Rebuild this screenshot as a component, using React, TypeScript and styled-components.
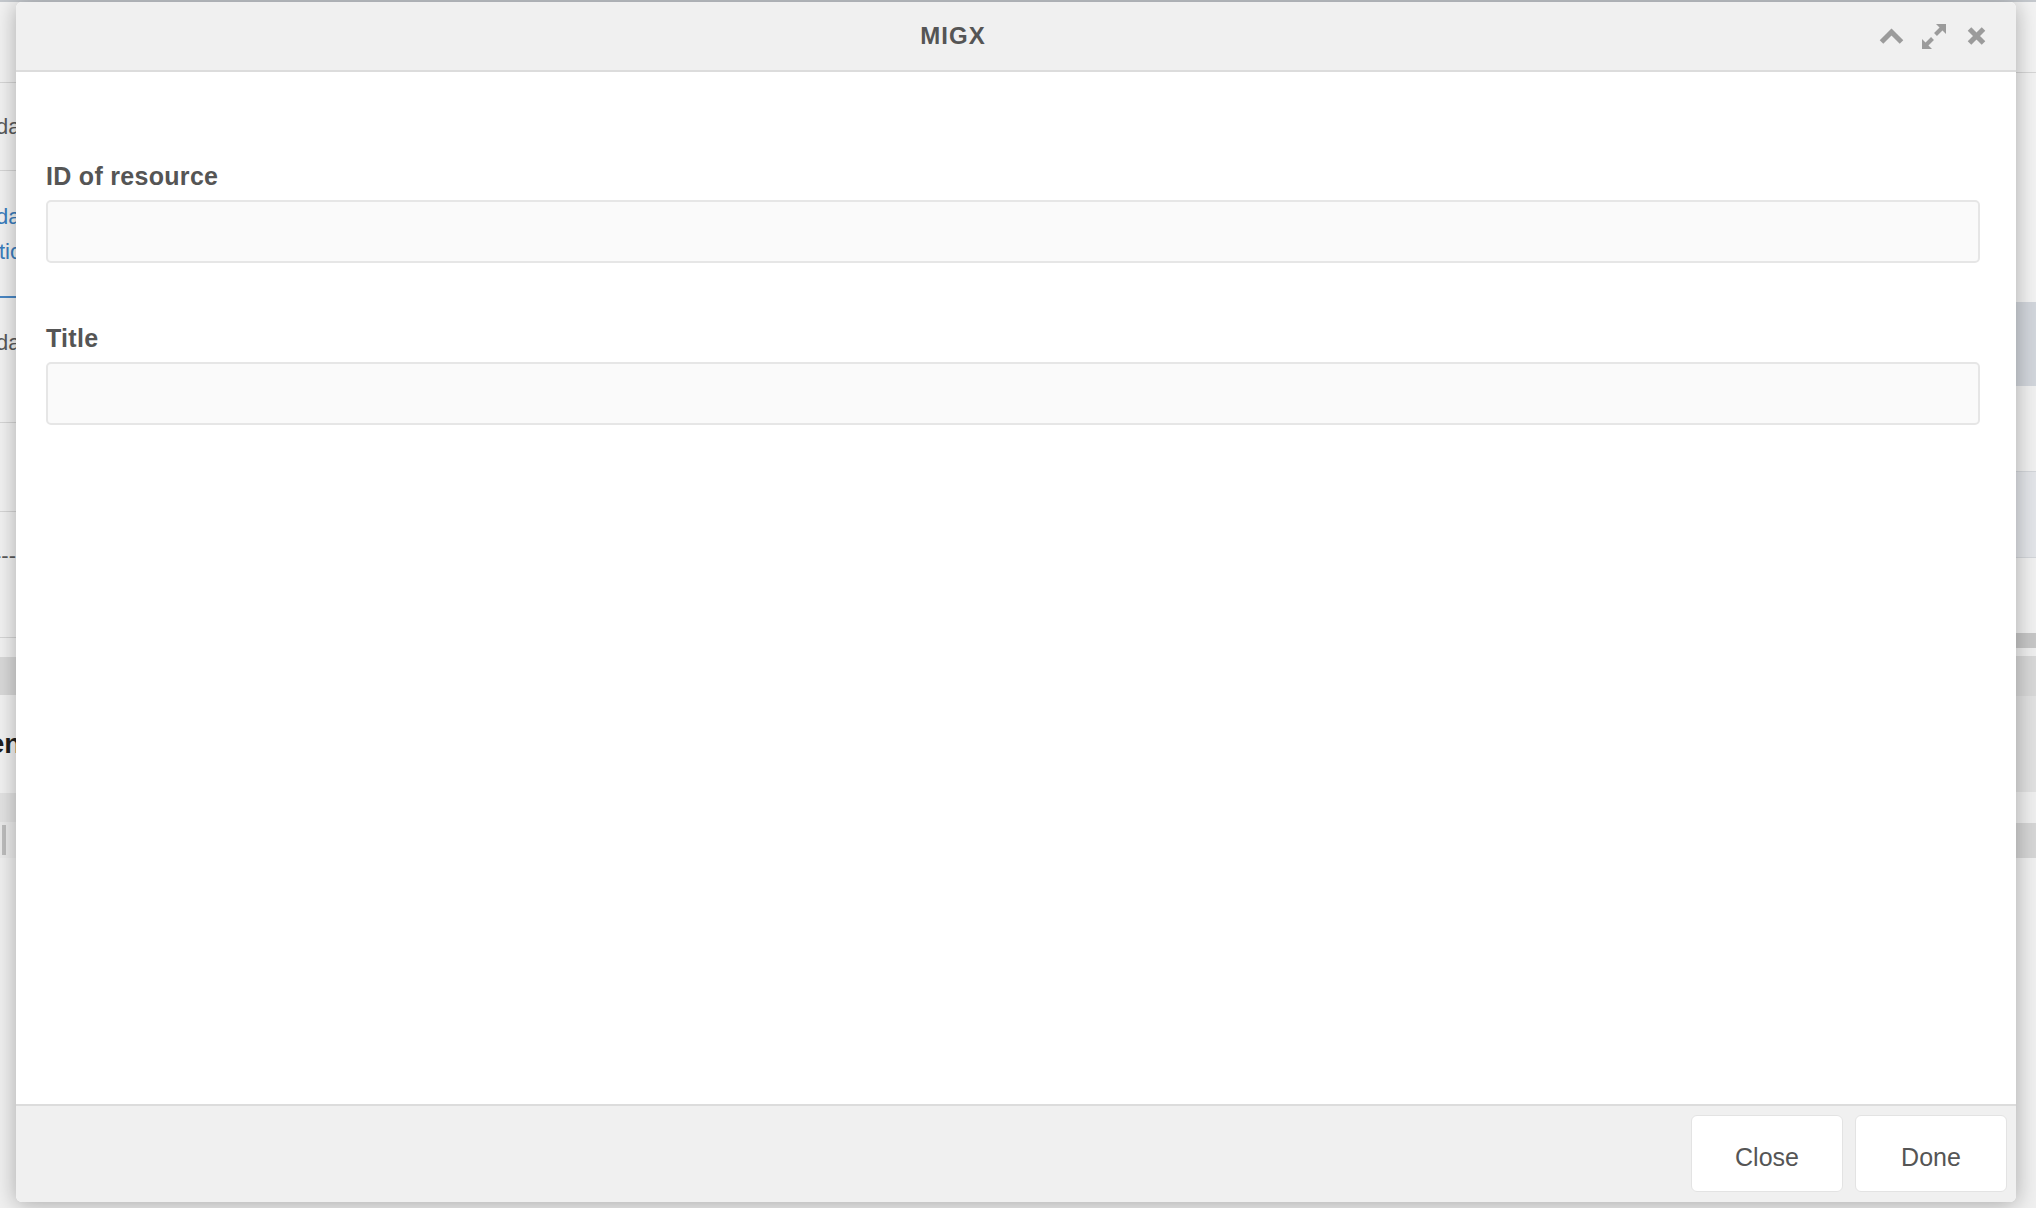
import React from "react";
import styled, { createGlobalStyle } from "styled-components";

const GlobalStyle = createGlobalStyle`
  html, body {
    margin: 0;
    padding: 0;
    width: 100%;
    height: 100%;
    overflow: hidden;
  }
  body {
    font-family: "Liberation Sans", Arial, Helvetica, sans-serif;
    background: #efefef;
  }
  #root {
    width: 100%;
    height: 100%;
  }
`;

/* ---------- page behind the window ---------- */

const Page = styled.div`
  position: relative;
  width: 2036px;
  height: 1208px;
  overflow: hidden;
`;

const Backdrop = styled.div`
  display: flex;
  flex-direction: column;
  height: 100%;
`;

const TopStrip = styled.div`
  height: 2px;
  flex-shrink: 0;
  background: #c4c8cd;
`;

const Columns = styled.div`
  flex: 1;
  display: grid;
  grid-template-columns: 640px 1fr;
  min-height: 0;
`;

const Pane = styled.div`
  display: flex;
  flex-direction: column;
  overflow: hidden;
  background: #efefef;
`;

const Row = styled.div<{
  $h?: number;
  $bg?: string;
  $line?: string;
  $lineW?: number;
  $padTop?: number;
}>`
  box-sizing: border-box;
  ${(p) => (p.$h ? `height: ${p.$h}px; flex-shrink: 0;` : "flex: 1;")}
  background: ${(p) => p.$bg || "#efefef"};
  border-bottom: ${(p) => (p.$line ? `${p.$lineW || 1}px solid ${p.$line}` : "none")};
  display: flex;
  flex-direction: column;
  justify-content: ${(p) => (p.$padTop !== undefined ? "flex-start" : "center")};
  padding-top: ${(p) => p.$padTop || 0}px;
`;

const PageText = styled.span<{ $indent: number; $tone?: "link" | "heading" }>`
  display: block;
  white-space: nowrap;
  margin-left: ${(p) => p.$indent}px;
  font-size: ${(p) => (p.$tone === "heading" ? 28 : 22)}px;
  font-weight: ${(p) => (p.$tone === "heading" ? 700 : 400)};
  line-height: ${(p) => (p.$tone === "link" ? 35 : 30)}px;
  color: ${(p) =>
    p.$tone === "link" ? "#3b7dbd" : p.$tone === "heading" ? "#1e1e1e" : "#5a5a5a"};
`;

const Marker = styled.span`
  display: block;
  width: 4px;
  height: 30px;
  margin-left: 2px;
  background: #bdbdbd;
`;

/* ---------- window ---------- */

const Window = styled.section`
  position: absolute;
  left: 16px;
  top: 2px;
  width: 2000px;
  height: 1200px;
  display: flex;
  flex-direction: column;
  background: #ffffff;
  border-radius: 6px;
  overflow: hidden;
  box-shadow: 0 2px 22px rgba(0, 0, 0, 0.3);
`;

const Header = styled.header`
  box-sizing: border-box;
  height: 70px;
  flex-shrink: 0;
  display: flex;
  align-items: center;
  background: #f0f0f0;
  border-bottom: 2px solid #dcdcdc;
`;

const HeaderTitle = styled.h1`
  flex: 1;
  margin: 0;
  padding-left: 11px;
  text-align: center;
  font-size: 24px;
  font-weight: 700;
  letter-spacing: 1px;
  color: #555555;
`;

const Tools = styled.div`
  display: flex;
  align-items: center;
  padding-right: 30px;
`;

const Tool = styled.span<{ $gap?: number }>`
  display: flex;
  align-items: center;
  margin-left: ${(p) => p.$gap || 0}px;
  cursor: pointer;
  svg {
    display: block;
  }
`;

const Body = styled.div`
  flex: 1;
  display: flex;
  flex-direction: column;
  padding: 89px 36px 0 30px;
`;

const Field = styled.div`
  display: flex;
  flex-direction: column;
  margin-bottom: 60px;
`;

const Label = styled.label`
  display: block;
  font-size: 25px;
  font-weight: 700;
  line-height: 30px;
  letter-spacing: 0.3px;
  color: #555555;
`;

const TextInput = styled.input`
  display: block;
  box-sizing: border-box;
  width: 100%;
  height: 63px;
  margin-top: 9px;
  padding: 0 14px;
  background: #fafafa;
  border: 2px solid #e6e6e6;
  border-radius: 5px;
  font-family: inherit;
  font-size: 22px;
  color: #555555;
  outline: none;
`;

const Footer = styled.footer`
  box-sizing: border-box;
  height: 98px;
  flex-shrink: 0;
  display: flex;
  justify-content: flex-end;
  align-items: flex-start;
  gap: 12px;
  padding: 9px 9px 0 0;
  background: #f0f0f0;
  border-top: 2px solid #dcdcdc;
`;

const Button = styled.button`
  box-sizing: border-box;
  width: 152px;
  height: 77px;
  padding: 8px 0 0;
  background: #ffffff;
  border: 1px solid #e3e3e3;
  border-radius: 6px;
  font-family: "Liberation Sans", Arial, Helvetica, sans-serif;
  font-size: 25px;
  color: #555555;
  cursor: pointer;
`;

/* ---------- tool icons ---------- */

const ICON = "#9b9b9b";

const CollapseIcon = () => (
  <svg width="25" height="17" viewBox="0 0 25 17">
    <path d="M2.5 14 L12.5 4 L22.5 14" fill="none" stroke={ICON} strokeWidth="5" />
  </svg>
);

const MaximizeIcon = () => (
  <svg width="24" height="25" viewBox="0 0 24 25">
    <polygon points="24,0 24,10 14,0" fill={ICON} />
    <line x1="19.5" y1="4.5" x2="13.5" y2="10.5" stroke={ICON} strokeWidth="4" />
    <polygon points="0,25 0,15 10,25" fill={ICON} />
    <line x1="4.5" y1="20.5" x2="10.5" y2="14.5" stroke={ICON} strokeWidth="4" />
  </svg>
);

const CloseIcon = () => (
  <svg width="19" height="18" viewBox="0 0 19 18">
    <path d="M2.5 2 L16.5 16 M16.5 2 L2.5 16" fill="none" stroke={ICON} strokeWidth="5" />
  </svg>
);

/* ---------- app ---------- */

export default function App() {
  return (
    <>
      <GlobalStyle />
      <Page>
        <Backdrop>
          <TopStrip />
          <Columns>
            <Pane>
              <Row $h={81} $bg="#f2f2f2" $line="#d5d5d5" />
              <Row $h={88} $bg="#f2f2f2" $line="#d5d5d5">
                <PageText $indent={-32}>Update</PageText>
              </Row>
              <Row $h={127} $bg="#f2f2f2" $line="#4a87c4" $lineW={2}>
                <PageText $indent={-32} $tone="link">Update</PageText>
                <PageText $indent={-39} $tone="link">Section</PageText>
              </Row>
              <Row $h={125} $bg="#f2f2f2" $line="#d5d5d5" $padTop={30}>
                <PageText $indent={-32}>Update</PageText>
              </Row>
              <Row $h={89} $bg="#f2f2f2" $line="#d5d5d5" />
              <Row $h={126} $bg="#f2f2f2" $line="#d5d5d5" $padTop={29}>
                <PageText $indent={-6}>------</PageText>
              </Row>
              <Row $h={19} $bg="#f2f2f2" />
              <Row $h={38} $bg="#d9d9d9" />
              <Row $h={98} $bg="#f2f2f2">
                <PageText $indent={-75} $tone="heading">Content</PageText>
              </Row>
              <Row $h={29} $bg="#e3e3e3" />
              <Row $h={36} $bg="#ebebeb">
                <Marker />
              </Row>
              <Row $bg="#f0f0f0" />
            </Pane>
            <Pane>
              <Row $h={71} $bg="#f3f3f3" $line="#d6d6d6" />
              <Row $h={229} $bg="#f3f3f3" />
              <Row $h={84} $bg="#d2d6dc" />
              <Row $h={86} $bg="#f1f1f1" $line="#d3d6da" />
              <Row $h={86} $bg="#e3e5e9" $line="#d3d6da" />
              <Row $h={75} $bg="#f1f1f1" />
              <Row $h={15} $bg="#c7c7c7" />
              <Row $h={8} $bg="#efefef" />
              <Row $h={40} $bg="#d8d8d8" />
              <Row $h={96} $bg="#e1e1e1" />
              <Row $h={31} $bg="#efefef" />
              <Row $h={35} $bg="#d6d6d6" />
              <Row $bg="#f0f0f0" />
            </Pane>
          </Columns>
        </Backdrop>

        <Window>
          <Header>
            <HeaderTitle>MIGX</HeaderTitle>
            <Tools>
              <Tool>
                <CollapseIcon />
              </Tool>
              <Tool $gap={18}>
                <MaximizeIcon />
              </Tool>
              <Tool $gap={21}>
                <CloseIcon />
              </Tool>
            </Tools>
          </Header>
          <Body>
            <Field>
              <Label htmlFor="resource-id">ID of resource</Label>
              <TextInput id="resource-id" type="text" />
            </Field>
            <Field>
              <Label htmlFor="resource-title">Title</Label>
              <TextInput id="resource-title" type="text" />
            </Field>
          </Body>
          <Footer>
            <Button type="button">Close</Button>
            <Button type="button">Done</Button>
          </Footer>
        </Window>
      </Page>
    </>
  );
}
